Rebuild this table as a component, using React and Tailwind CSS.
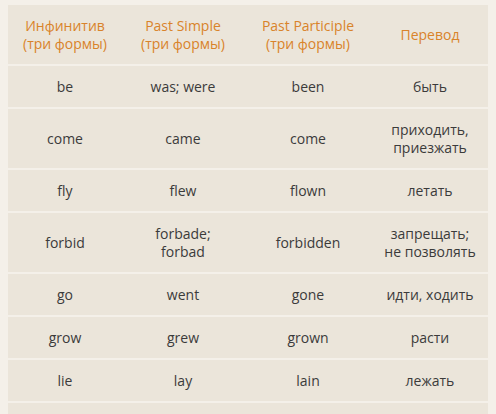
export default function App() {
  const rows = [
    ["be", "was; were", "been", "быть"],
    ["come", "came", "come", "приходить,\nприезжать"],
    ["fly", "flew", "flown", "летать"],
    ["forbid", "forbade;\nforbad", "forbidden", "запрещать;\nне позволять"],
    ["go", "went", "gone", "идти, ходить"],
    ["grow", "grew", "grown", "расти"],
    ["lie", "lay", "lain", "лежать"],
    ["", "", "", ""],
  ];
  const head = ["Инфинитив\n(три формы)", "Past Simple\n(три формы)", "Past Participle\n(три формы)", "Перевод"];
  const grid = "grid grid-cols-[114px_122px_128px_116px] bg-[#ebe5da]";
  const cell = "flex items-center justify-center text-center whitespace-pre-line px-2 py-[11.5px] leading-[18px]";
  return (
    <div className="h-[414px] w-[496px] overflow-hidden bg-[#f4f0e9] pl-2 pt-[5px] text-[14px] font-['Open_Sans',sans-serif]">
      <div className="flex w-[480px] flex-col gap-[2px]">
        <div className={grid}>
          {head.map((h, i) => (
            <div key={i} className={cell + " text-[#d9832a]"}>{h}</div>
          ))}
        </div>
        {rows.map((r, j) => (
          <div key={j} className={grid}>
            {r.map((c, i) => (
              <div key={i} className={cell + " min-h-[41px] text-[#3b3b3b]"}>{c}</div>
            ))}
          </div>
        ))}
      </div>
    </div>
  );
}
